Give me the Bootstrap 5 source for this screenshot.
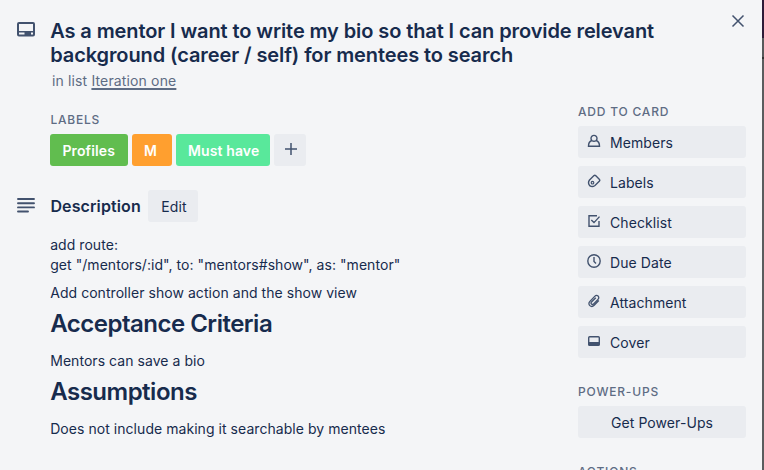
<!DOCTYPE html>
<html lang="en">
<head>
<meta charset="utf-8">
<meta name="viewport" content="width=device-width, initial-scale=1">
<title>Card details</title>
<link href="https://cdn.jsdelivr.net/npm/bootstrap@5.3.0/dist/css/bootstrap.min.css" rel="stylesheet">
<style>
body{width:764px;height:470px;background:#f4f5f7;color:#172b4d;font:14px/20px Inter,sans-serif}
.backdrop-edge{width:2px;background:linear-gradient(#2e1b38 0 38px,#58595b 38px 57px,#333 57px 59px,#5b5c5e 59px)}
.card-window{width:762px}
.main-col{width:578px;padding:19px 0 0 16px}
.side-col{width:168px;padding-top:102px}
.icon-col{width:34px}
h1,h2,h3{margin:0;font-weight:600}
.title{font-size:20px;line-height:24px;letter-spacing:-.1px;padding-left:.2px}
.in-list{padding:4px 0 0 2px;color:#5e6c84;letter-spacing:.14px}
.in-list a{color:#5e6c84;text-decoration:underline 2px;text-underline-offset:2px}
.eyebrow{font-size:12px;line-height:20px;font-weight:500;color:#5e6c84;text-transform:uppercase;letter-spacing:.8px}
.labels-title{margin-top:19px;padding-left:.4px}
.chips{gap:4px;margin-top:4px}
.chip{height:32px;line-height:34px;border-radius:3px;color:#fff;font-weight:600;padding-left:12.4px;white-space:nowrap;letter-spacing:.12px}
.green{width:78px;background:#61bd4f}.orange{width:40px;padding-left:12px;background:#ff9f2f}.lime{width:94px;padding-left:12px;background:#59e89b}
.tile{height:32px;border-radius:3px;background:#eaecf0;color:#172b4d;line-height:34px;letter-spacing:.08px}
.add-chip{width:32px;padding-left:1px}
.desc-head{margin-top:24px;height:32px}
.desc-head h2{font-size:16px;line-height:32px;width:98px;letter-spacing:.12px;padding-left:.4px}
.edit{width:50px;padding-left:2px}
.desc{padding:13px 0 0 34.2px}
.desc p{margin:0 0 8px;white-space:nowrap;letter-spacing:.05px}
.desc h1{font-size:24px;line-height:28px;margin:-1px 0 13px;letter-spacing:-.5px}
.tile-list{gap:8px;margin-top:4px}
.tile-list .tile.d-flex{padding-top:2px}
.tile-list svg{margin:0 8px 4px;flex:none}
.group-gap{margin-top:24px}
.close{right:16px;top:13px}
svg{display:block;fill:none;stroke:#42526e}
</style>
</head>
<body class="d-flex overflow-hidden position-relative">
<div class="card-window d-flex">
<main class="main-col flex-shrink-0">
  <header class="d-flex">
    <div class="icon-col flex-shrink-0"><svg width="20" height="20" viewBox="0 0 20 20"><path fill="#42526e" stroke="none" fill-rule="evenodd" d="M3 3h14a2 2 0 0 1 2 2v10.500a2 2 0 0 1-2 2H3a2 2 0 0 1-2-2V5a2 2 0 0 1 2-2zm0 2v7h14V5zM3 13.500v2h5.500v-2zM15 13.500v2h2v-2z"/></svg></div>
    <div>
      <h1 class="title text-nowrap">As a mentor I want to write my bio so that I can provide relevant<br>background (career / self) for mentees to search</h1>
      <div class="in-list">in list <a href="#">Iteration one</a></div>
      <div class="eyebrow labels-title">Labels</div>
      <div class="chips d-flex">
        <span class="chip green">Profiles</span><span class="chip orange">M</span><span class="chip lime">Must have</span>
        <span class="tile add-chip d-flex justify-content-center"><svg width="14" height="14" viewBox="0 0 14 14" class="mt-2"><path stroke-width="1.500" d="M7 1v12M1 7h12"/></svg></span>
      </div>
    </div>
  </header>
  <section>
    <div class="desc-head d-flex">
      <div class="icon-col flex-shrink-0"><svg width="20" height="32" viewBox="0 0 20 32"><path stroke-width="1.900" stroke-linecap="round" d="M2 9h16M2 13.200h16M2 17.400h16M2 21.500h10"/></svg></div>
      <h2>Description</h2><a class="tile edit text-center text-decoration-none" href="#">Edit</a>
    </div>
    <div class="desc">
      <p>add route:<br>get "/mentors/:id", to: "mentors#show", as: "mentor"</p>
      <p>Add controller show action and the show view</p>
      <h1>Acceptance Criteria</h1>
      <p>Mentors can save a bio</p>
      <h1>Assumptions</h1>
      <p>Does not include making it searchable by mentees</p>
    </div>
  </section>
</main>
<aside class="side-col flex-shrink-0">
  <div class="eyebrow">Add to card</div>
  <div class="tile-list d-flex flex-column">
    <div class="tile d-flex align-items-center"><svg width="16" height="16" viewBox="0 0 16 16"><path stroke-width="1.400" d="M5.900 7.500a3 3 0 1 1 4.200 0M5.700 7.500C3.600 8.300 2.500 10.300 2.500 13.200h11c0-2.900-1.100-4.900-3.200-5.700q-2.300 1.500-4.600 0z"/></svg>Members</div>
    <div class="tile d-flex align-items-center"><svg width="16" height="16" viewBox="0 0 16 16"><path stroke-width="1.400" d="M3.500 7 8 2.600q.8-.6 1.600 0l3.900 3.900q.7.800 0 1.600L9 12.500q-2.600 1.900-5 .4-2.700-2.800-.5-5.900z"/><circle cx="6.500" cy="9.700" r="1.300" stroke-width="1.200"/></svg>Labels</div>
    <div class="tile d-flex align-items-center"><svg width="16" height="16" viewBox="0 0 16 16"><path stroke-width="1.400" d="M11 2.700H3v10.600h10V8M5.300 7 8 9.600l5.500-6"/></svg>Checklist</div>
    <div class="tile d-flex align-items-center"><svg width="16" height="16" viewBox="0 0 16 16"><circle cx="8" cy="8" r="6.200" stroke-width="1.400"/><path stroke-width="1.400" d="M8 4v4.500l2 2"/></svg>Due Date</div>
    <div class="tile d-flex align-items-center"><svg width="16" height="16" viewBox="0 0 16 16"><path stroke-width="1.300" d="m12.800 7.500-4.600 4.800c-3 3-7.200-.8-4.300-3.900l4.800-5C11 1 14.300 4 12 6.400l-4.400 4.500c-1.500 1.500-3.500-.4-2.100-1.900L9.800 4.700"/></svg>Attachment</div>
    <div class="tile d-flex align-items-center"><svg width="16" height="16" viewBox="0 0 16 16"><rect x="2.700" y="3.700" width="10.600" height="8.600" rx="1" stroke-width="1.400"/><path fill="#42526e" stroke="none" d="M2.500 9h11v3.500h-11z"/></svg>Cover</div>
  </div>
  <div class="eyebrow group-gap">Power-Ups</div>
  <div class="tile-list"><div class="tile text-center">Get Power-Ups</div></div>
  <div class="eyebrow group-gap">Actions</div>
</aside>
<svg class="close position-absolute" width="20" height="20" viewBox="0 0 20 20"><path stroke-width="1.500" d="m4.500 2.500 11 11m0-11-11 11"/></svg>
</div>
<div class="backdrop-edge flex-shrink-0"></div>
<script src="https://cdn.jsdelivr.net/npm/bootstrap@5.3.0/dist/js/bootstrap.bundle.min.js"></script>
</body>
</html>
